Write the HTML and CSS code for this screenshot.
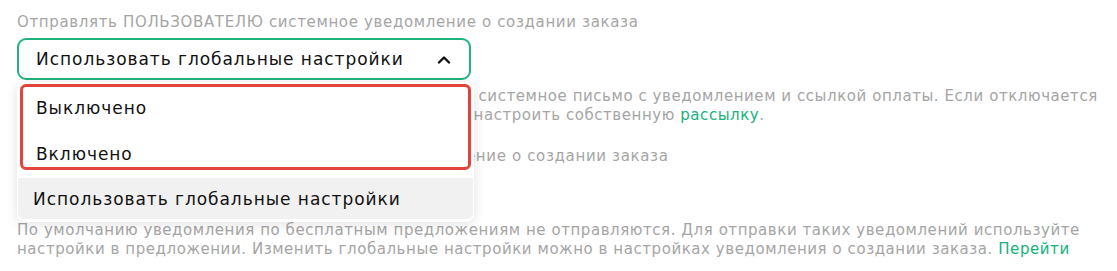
FILE: index.html
```html
<!DOCTYPE html>
<html>
<head>
    <title>Уведомления о заказе</title>
    <link rel="stylesheet" href="styles.css">
</head>
<body>
    <div class="field">
        <div class="label">Отправлять ПОЛЬЗОВАТЕЛЮ системное уведомление о создании заказа</div>
        <div class="select open">
            <div class="select-value">
                <span>Использовать глобальные настройки</span>
                <svg class="chevron" width="14" height="9" viewBox="0 0 14 9">
                    <path d="M2 7.5 L7 2.5 L12 7.5" fill="none" stroke="#111" stroke-width="2.4" stroke-linecap="round" stroke-linejoin="round"/>
                </svg>
            </div>
            <div class="menu">
                <div class="marked">
                    <div class="option">Выключено</div>
                    <div class="option">Включено</div>
                </div>
                <div class="option selected">Использовать глобальные настройки</div>
            </div>
        </div>
        <p class="help">Если включено, то пользователю будет отправляться системное письмо с уведомлением и ссылкой оплаты. Если отключается<br>
        уведомление, то вы всегда сможете самостоятельно настроить собственную <a href="#">рассылку</a>.</p>
    </div>

    <div class="field">
        <div class="label">Отправлять АДМИНИСТРАТОРАМ системное уведомление о создании заказа</div>
        <div class="select">
            <div class="select-value">
                <span>Использовать глобальные настройки</span>
            </div>
        </div>
        <p class="help">По умолчанию уведомления по бесплатным предложениям не отправляются. Для отправки таких уведомлений используйте<br>
        настройки в предложении. Изменить глобальные настройки можно в настройках уведомления о создании заказа. <a href="#">Перейти</a></p>
    </div>
</body>
</html>
```

FILE: styles.css
```css
body {
    margin: 0;
    padding: 12px 17px 0;
    font-family: "DejaVu Sans", Arial, sans-serif;
    background: #fff;
    color: #111;
}
.field {
    margin-bottom: 21px;
}
.label {
    font-size: 15px;
    line-height: 20px;
    letter-spacing: 0.65px;
    color: #a5a5a5;
    margin-bottom: 6px;
}
.select {
    position: relative;
    width: 454px;
}
.select-value {
    display: flex;
    align-items: center;
    justify-content: space-between;
    height: 38px;
    padding: 0 18px 0 17px;
    border: 2px solid #d8d8d8;
    border-radius: 9px;
    font-size: 17px;
    letter-spacing: 0.95px;
}
.select.open .select-value {
    border-color: #1fb47d;
}
.menu {
    position: absolute;
    top: 44px;
    left: 0;
    right: -3px;
    background: #fff;
    border-radius: 8px;
    box-shadow: 0 2px 12px rgba(0, 0, 0, 0.12);
    padding: 2px 3px 3px;
    z-index: 2;
}
.marked {
    border: 3px solid #e2433a;
    border-radius: 6px;
    margin-bottom: 8px;
}
.option {
    font-size: 17px;
    line-height: 22px;
    letter-spacing: 0.95px;
    padding: 10px 13px 9px;
}
.marked .option:first-child {
    padding-top: 10px;
    padding-bottom: 14px;
}
.marked .option:last-child {
    padding-top: 10px;
    padding-bottom: 2px;
}
.option.selected {
    background: #f1f1f1;
    margin: 0 -2px;
    padding-left: 15px;
    border-radius: 0 0 6px 6px;
}
.help {
    margin: 7px 0 0;
    font-size: 15px;
    line-height: 19px;
    letter-spacing: 0.56px;
    color: #a5a5a5;
}
.help a {
    color: #14b27c;
    text-decoration: none;
}
```
